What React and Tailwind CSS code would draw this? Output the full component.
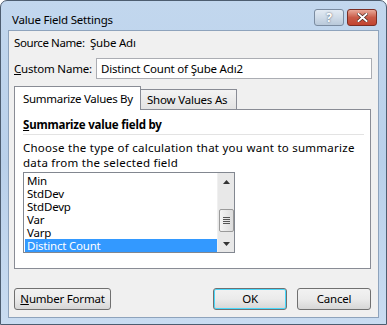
import React from "react";

const F = { fontFamily: '"Noto Sans", "Segoe UI", sans-serif' };

function Btn({ children, className = "" }) {
  return (
    <div
      className={
        "h-[22px] flex items-center justify-center rounded-[3px] border border-[#707070] bg-gradient-to-b from-[#f2f2f2] via-[#ebebeb] to-[#d6d6d6] text-[11.5px] text-black whitespace-nowrap " +
        className
      }
    >
      {children}
    </div>
  );
}

export default function App() {
  const items = ["Min", "StdDev", "StdDevp", "Var", "Varp"];
  return (
    <div className="w-[387px] h-[325px] overflow-hidden bg-white" style={F}>
      <div className="w-[387px] h-[325px] rounded-t-[7px] border border-[#4d5d70] bg-gradient-to-b from-[#c2d7ee] via-[#b9d0ea] to-[#c9dcf1] flex flex-col px-[7px] pb-[6px]">
        {/* title bar */}
        <div className="h-[29px] shrink-0 flex items-start">
          <div className="flex-1 pt-[11px] pl-[4px] text-[11.5px] leading-[16px] text-black whitespace-nowrap tracking-[-0.2px]">Value Field Settings</div>
          <div className="flex pt-[8px] gap-[3px] pr-[2px]">
            <div className="w-[30px] h-[17px] rounded-[3px] border border-[#7a8ba0] bg-gradient-to-b from-[#e3ebf4] via-[#cfdbe8] to-[#b9c9da] flex items-center justify-center text-[12px] font-bold leading-none text-white [text-shadow:0_0_2px_#3b4a5c]">
              ?
            </div>
            <div className="w-[30px] h-[17px] rounded-[3px] border border-[#7b2e24] bg-gradient-to-b from-[#e9a99a] via-[#c95b48] to-[#c24430] flex items-center justify-center">
              <svg width="11" height="9" viewBox="0 0 11 9">
                <path d="M1.5 1 L9.5 8 M9.5 1 L1.5 8" stroke="#3a1a14" strokeWidth="3.2" strokeLinecap="square" />
                <path d="M1.5 1 L9.5 8 M9.5 1 L1.5 8" stroke="#ffffff" strokeWidth="2" strokeLinecap="square" />
              </svg>
            </div>
          </div>
        </div>
        {/* client */}
        <div className="flex-1 border border-[#8ea3bc] bg-[#f0f0f0] flex flex-col pl-[5px] pr-[6px] text-[11.5px] text-black whitespace-nowrap tracking-[-0.2px]">
          <div className="h-[24px] shrink-0 flex items-center">
            <span className="w-[76px] shrink-0 tracking-[-0.4px]">Source Name:</span>
            <span>Şube Adı</span>
          </div>
          <div className="h-[21px] shrink-0 mt-[3px] flex items-center">
            <span className="w-[82px] shrink-0">
              <u>C</u>ustom Name:
            </span>
            <div className="flex-1 h-[21px] border border-[#abadb3] bg-white flex items-center pl-[4px]">
              Distinct Count of Şube Adı2
            </div>
          </div>
          {/* tabs */}
          <div className="mt-[7px] shrink-0 flex items-end h-[23px] relative z-10">
            <div className="w-[127px] h-[24px] border border-b-0 border-[#898c95] bg-white flex items-center pl-[8px] -mb-[1px] tracking-[-0.3px]">
              Summarize Values By
            </div>
            <div className="w-[96px] h-[20px] border border-l-0 border-b-0 border-[#898c95] bg-gradient-to-b from-[#f3f3f3] to-[#e3e3e3] flex items-center pl-[6px]">
              Show Values As
            </div>
          </div>
          <div className="w-[357px] h-[160px] shrink-0 border border-[#898c95] bg-white flex flex-col pl-[8px] pr-[6px]">
            <div className="mt-[7px] h-[16px] leading-[16px] font-bold">
              <u>S</u>ummarize value field by
            </div>
            <div className="mt-[1px] h-[1px] bg-[#e3e3e3]" />
            <div className="mt-[5px] leading-[15px] tracking-[0.25px]">
              Choose the type of calculation that you want to summarize
              <br />
              data from the selected field
            </div>
            <div className="mt-[2px] w-[212px] h-[81px] border border-[#828790] bg-white flex">
              <div className="flex-1 flex flex-col pt-[1px] pl-[1px] leading-[13px]">
                {items.map((t) => (
                  <div key={t} className="h-[13px] pl-[2px]">
                    {t}
                  </div>
                ))}
                <div className="h-[13px] pl-[2px] bg-[#3399ff] text-white">Distinct Count</div>
              </div>
              <div className="w-[17px] bg-[#e8e8e8] border-l border-[#f0f0f0] flex flex-col items-center">
                <div className="h-[17px] flex items-center justify-center">
                  <svg width="7" height="4" viewBox="0 0 7 4"><path d="M0 4 L3.5 0 L7 4Z" fill="#333" /></svg>
                </div>
                <div className="h-[19px]" />
                <div className="w-[15px] h-[23px] rounded-[2px] border border-[#9a9a9a] bg-gradient-to-r from-[#f4f4f4] to-[#dcdcdc] flex flex-col items-center justify-center gap-[1px]">
                  <div className="w-[7px] h-[1px] bg-[#555]" />
                  <div className="w-[7px] h-[1px] bg-[#555]" />
                  <div className="w-[7px] h-[1px] bg-[#555]" />
                  <div className="w-[7px] h-[1px] bg-[#555]" />
                </div>
                <div className="flex-1" />
                <div className="h-[17px] flex items-center justify-center">
                  <svg width="7" height="4" viewBox="0 0 7 4"><path d="M0 0 L3.5 4 L7 0Z" fill="#333" /></svg>
                </div>
              </div>
            </div>
          </div>
          {/* buttons */}
          <div className="mt-[19px] shrink-0 flex items-center">
            <Btn className="w-[97px]">
              <span>
                <u>N</u>umber Format
              </span>
            </Btn>
            <div className="flex-1" />
            <Btn className="w-[74px] border-[#3c7fb1] shadow-[inset_0_0_0_1px_#48d8fb]">OK</Btn>
            <Btn className="w-[74px] ml-[10px] mr-[1px]">Cancel</Btn>
          </div>
        </div>
      </div>
    </div>
  );
}
